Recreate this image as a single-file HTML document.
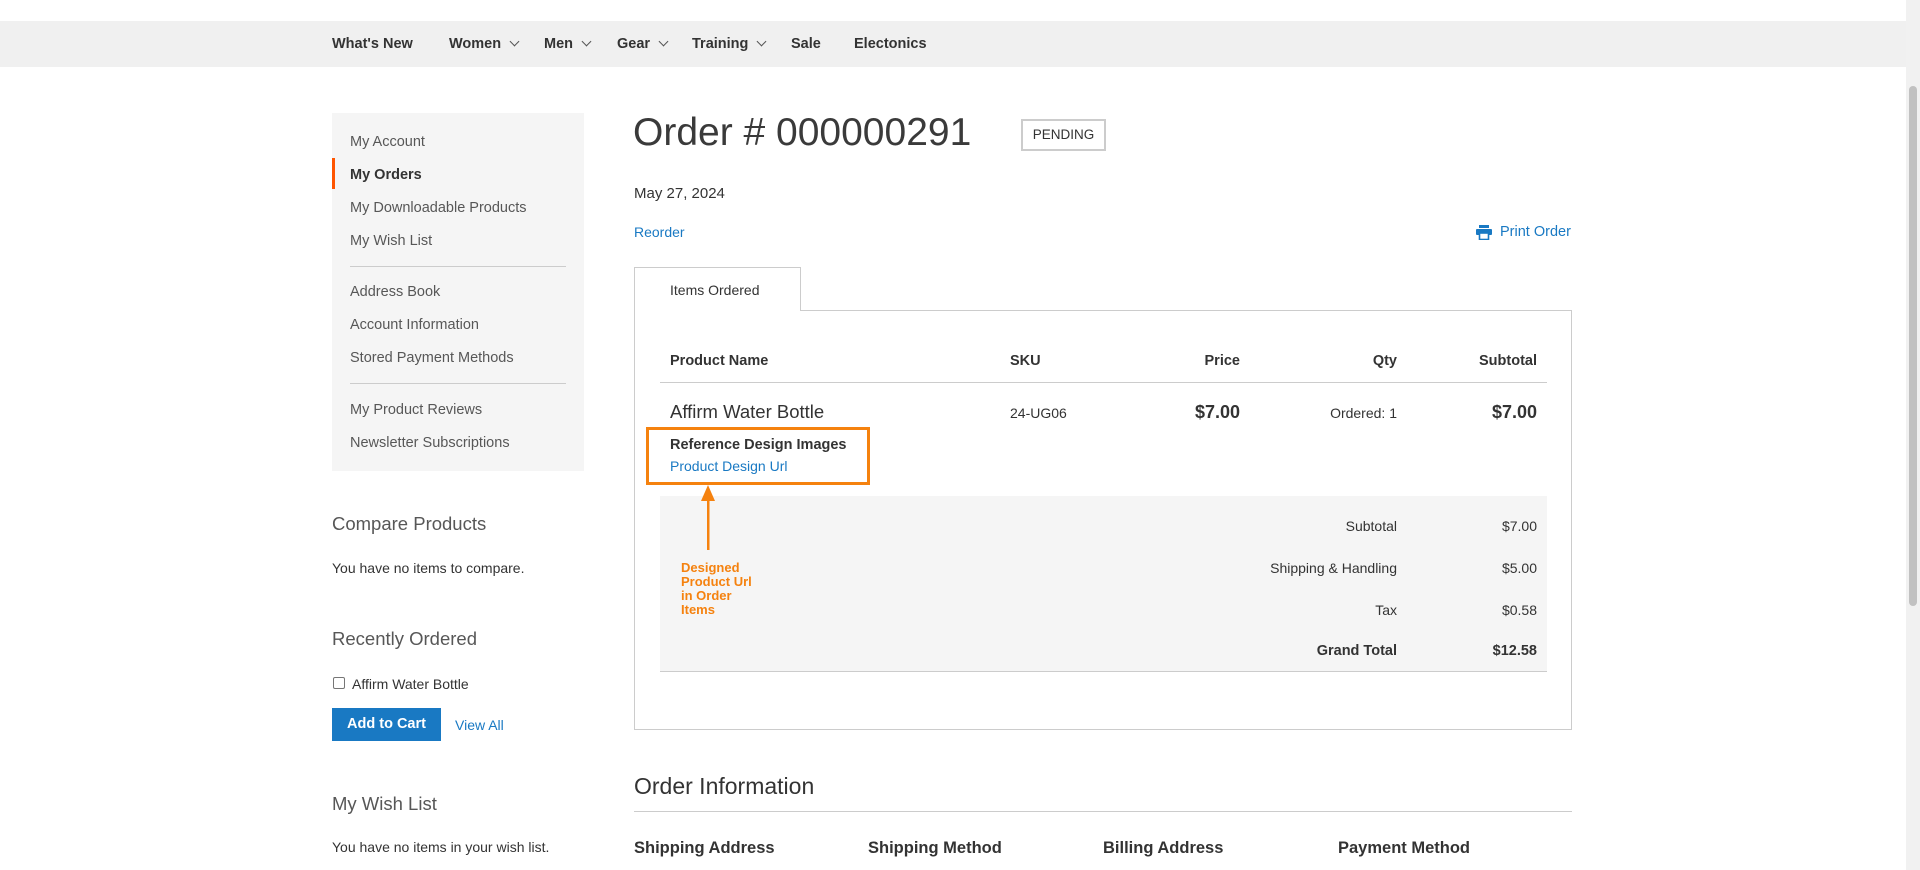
<!DOCTYPE html>
<html><head><meta charset="utf-8"><style>
*{margin:0;padding:0;box-sizing:border-box}
body{width:1920px;height:870px;overflow:hidden;background:#fff;font-family:"Liberation Sans",sans-serif;color:#333;position:relative;font-size:14px}
.a{position:absolute;white-space:nowrap}
.nav{position:absolute;left:0;top:21px;width:1906px;height:46px;background:#f0f0f0}
.nav span{position:absolute;top:15px;font-weight:bold;font-size:14.5px;color:#333}
.chev{display:inline-block;width:7px;height:7px;border-right:1.3px solid #555;border-bottom:1.3px solid #555;transform:rotate(45deg);margin-left:10px;position:relative;top:-3px}
.scroll{position:absolute;right:0;top:0;width:14px;height:870px;background:#f1f1f1}
.scroll div{position:absolute;left:3px;top:86px;width:8px;height:520px;background:#c1c1c1;border-radius:4px}
.side{position:absolute;left:332px;top:113px;width:252px;height:358px;background:#f5f5f5}
.side .i{position:absolute;left:18px;font-size:14.5px;color:#575757}
.side hr{position:absolute;left:18px;width:216px;border:0;border-top:1px solid #ccc}
.link{color:#1979c3}
.h3{font-size:18.5px;font-weight:300;color:#575757}
.th{font-weight:bold;font-size:14.5px}
.r{text-align:right}
</style></head><body>
<div class="nav">
<span style="left:332px">What's New</span>
<span style="left:449px">Women<i class="chev"></i></span>
<span style="left:544px">Men<i class="chev"></i></span>
<span style="left:617px">Gear<i class="chev"></i></span>
<span style="left:692px">Training<i class="chev"></i></span>
<span style="left:791px">Sale</span>
<span style="left:854px">Electonics</span>
</div>
<div class="scroll"><div></div></div>

<div class="side">
<div class="i" style="top:21px">My Account</div>
<div style="position:absolute;left:0;top:45px;width:3px;height:31px;background:#ff5501"></div>
<div class="i" style="top:54px;color:#333;font-weight:bold">My Orders</div>
<div class="i" style="top:87px">My Downloadable Products</div>
<div class="i" style="top:120px">My Wish List</div>
<hr style="top:153px">
<div class="i" style="top:171px">Address Book</div>
<div class="i" style="top:204px">Account Information</div>
<div class="i" style="top:237px">Stored Payment Methods</div>
<hr style="top:270px">
<div class="i" style="top:289px">My Product Reviews</div>
<div class="i" style="top:322px">Newsletter Subscriptions</div>
</div>

<div class="a h3" style="left:332px;top:513px">Compare Products</div>
<div class="a" style="left:332px;top:560px">You have no items to compare.</div>
<div class="a h3" style="left:332px;top:628px">Recently Ordered</div>
<div class="a" style="left:333px;top:677px;width:12px;height:12px;border:1px solid #767676;border-radius:2px;background:#fff"></div>
<div class="a" style="left:352px;top:676px">Affirm Water Bottle</div>
<div class="a" style="left:332px;top:708px;width:109px;height:33px;background:#1979c3;color:#fff;font-weight:bold;font-size:14.5px;text-align:center;line-height:33px">Add to Cart</div>
<div class="a link" style="left:455px;top:717px">View All</div>
<div class="a h3" style="left:332px;top:793px">My Wish List</div>
<div class="a" style="left:332px;top:839px">You have no items in your wish list.</div>

<div class="a" style="left:633px;top:111px;font-size:39px;font-weight:300;color:#3a3a3a">Order # 000000291</div>
<div class="a" style="left:1021px;top:119px;width:85px;height:32px;border:2px solid #ccc;font-size:13.5px;text-align:center;line-height:28px">PENDING</div>
<div class="a" style="left:634px;top:185px;font-size:15px">May 27, 2024</div>
<div class="a link" style="left:634px;top:224px">Reorder</div>
<svg class="a" style="left:1476px;top:225px" width="16" height="15" viewBox="0 0 16 15"><rect x="3" y="0" width="10" height="3" fill="#1979c3"/><rect x="0" y="4" width="16" height="6" rx="1" fill="#1979c3"/><rect x="3.5" y="8" width="9" height="6.5" fill="#fff" stroke="#1979c3" stroke-width="1.6"/></svg>
<div class="a link" style="left:1500px;top:224px;font-size:14.5px">Print Order</div>

<div class="a" style="left:634px;top:310px;width:938px;height:420px;border:1px solid #ccc"></div>
<div class="a" style="left:634px;top:267px;width:167px;height:44px;border:1px solid #ccc;border-bottom:0;background:#fff;font-size:14px;padding:14px 0 0 35px">Items Ordered</div>

<div class="a th" style="left:670px;top:353px">Product Name</div>
<div class="a th" style="left:1010px;top:353px">SKU</div>
<div class="a th r" style="left:1140px;width:100px;top:353px">Price</div>
<div class="a th r" style="left:1297px;width:100px;top:353px">Qty</div>
<div class="a th r" style="left:1437px;width:100px;top:353px">Subtotal</div>
<div class="a" style="left:660px;top:382px;width:887px;border-top:1px solid #ccc"></div>

<div class="a" style="left:670px;top:401px;font-size:18.5px">Affirm Water Bottle</div>
<div class="a" style="left:1010px;top:405px;font-size:14px">24-UG06</div>
<div class="a r" style="left:1140px;width:100px;top:402px;font-size:18px;font-weight:bold">$7.00</div>
<div class="a r" style="left:1297px;width:100px;top:405px">Ordered: 1</div>
<div class="a r" style="left:1437px;width:100px;top:402px;font-size:18px;font-weight:bold">$7.00</div>
<div class="a" style="left:670px;top:437px;font-weight:bold;font-size:14.5px">Reference Design Images</div>
<div class="a link" style="left:670px;top:458px">Product Design Url</div>

<div class="a" style="left:660px;top:496px;width:887px;height:176px;background:#f5f5f5;border-bottom:1px solid #ccc"></div>
<div class="a" style="left:646px;top:427px;width:224px;height:58px;border:3px solid #f5820f"></div>
<svg class="a" style="left:700px;top:485px" width="16" height="66"><polygon points="8,0 1,16 15,16" fill="#f5820f"/><rect x="7" y="14" width="2.5" height="51" fill="#f5820f"/></svg>
<div class="a" style="left:681px;top:561px;color:#f5820f;font-weight:bold;font-size:13px;line-height:14px">Designed<br>Product Url<br>in Order<br>Items</div>

<div class="a r" style="left:1197px;width:200px;top:518px">Subtotal</div>
<div class="a r" style="left:1437px;width:100px;top:518px">$7.00</div>
<div class="a r" style="left:1197px;width:200px;top:560px">Shipping &amp; Handling</div>
<div class="a r" style="left:1437px;width:100px;top:560px">$5.00</div>
<div class="a r" style="left:1197px;width:200px;top:602px">Tax</div>
<div class="a r" style="left:1437px;width:100px;top:602px">$0.58</div>
<div class="a r th" style="left:1197px;width:200px;top:643px">Grand Total</div>
<div class="a r th" style="left:1437px;width:100px;top:643px">$12.58</div>

<div class="a" style="left:634px;top:773px;font-size:23px;font-weight:300">Order Information</div>
<div class="a" style="left:634px;top:811px;width:938px;border-top:1px solid #ccc"></div>
<div class="a" style="left:634px;top:839px;font-weight:bold;font-size:16.5px">Shipping Address</div>
<div class="a" style="left:868px;top:839px;font-weight:bold;font-size:16.5px">Shipping Method</div>
<div class="a" style="left:1103px;top:839px;font-weight:bold;font-size:16.5px">Billing Address</div>
<div class="a" style="left:1338px;top:839px;font-weight:bold;font-size:16.5px">Payment Method</div>
</body></html>
